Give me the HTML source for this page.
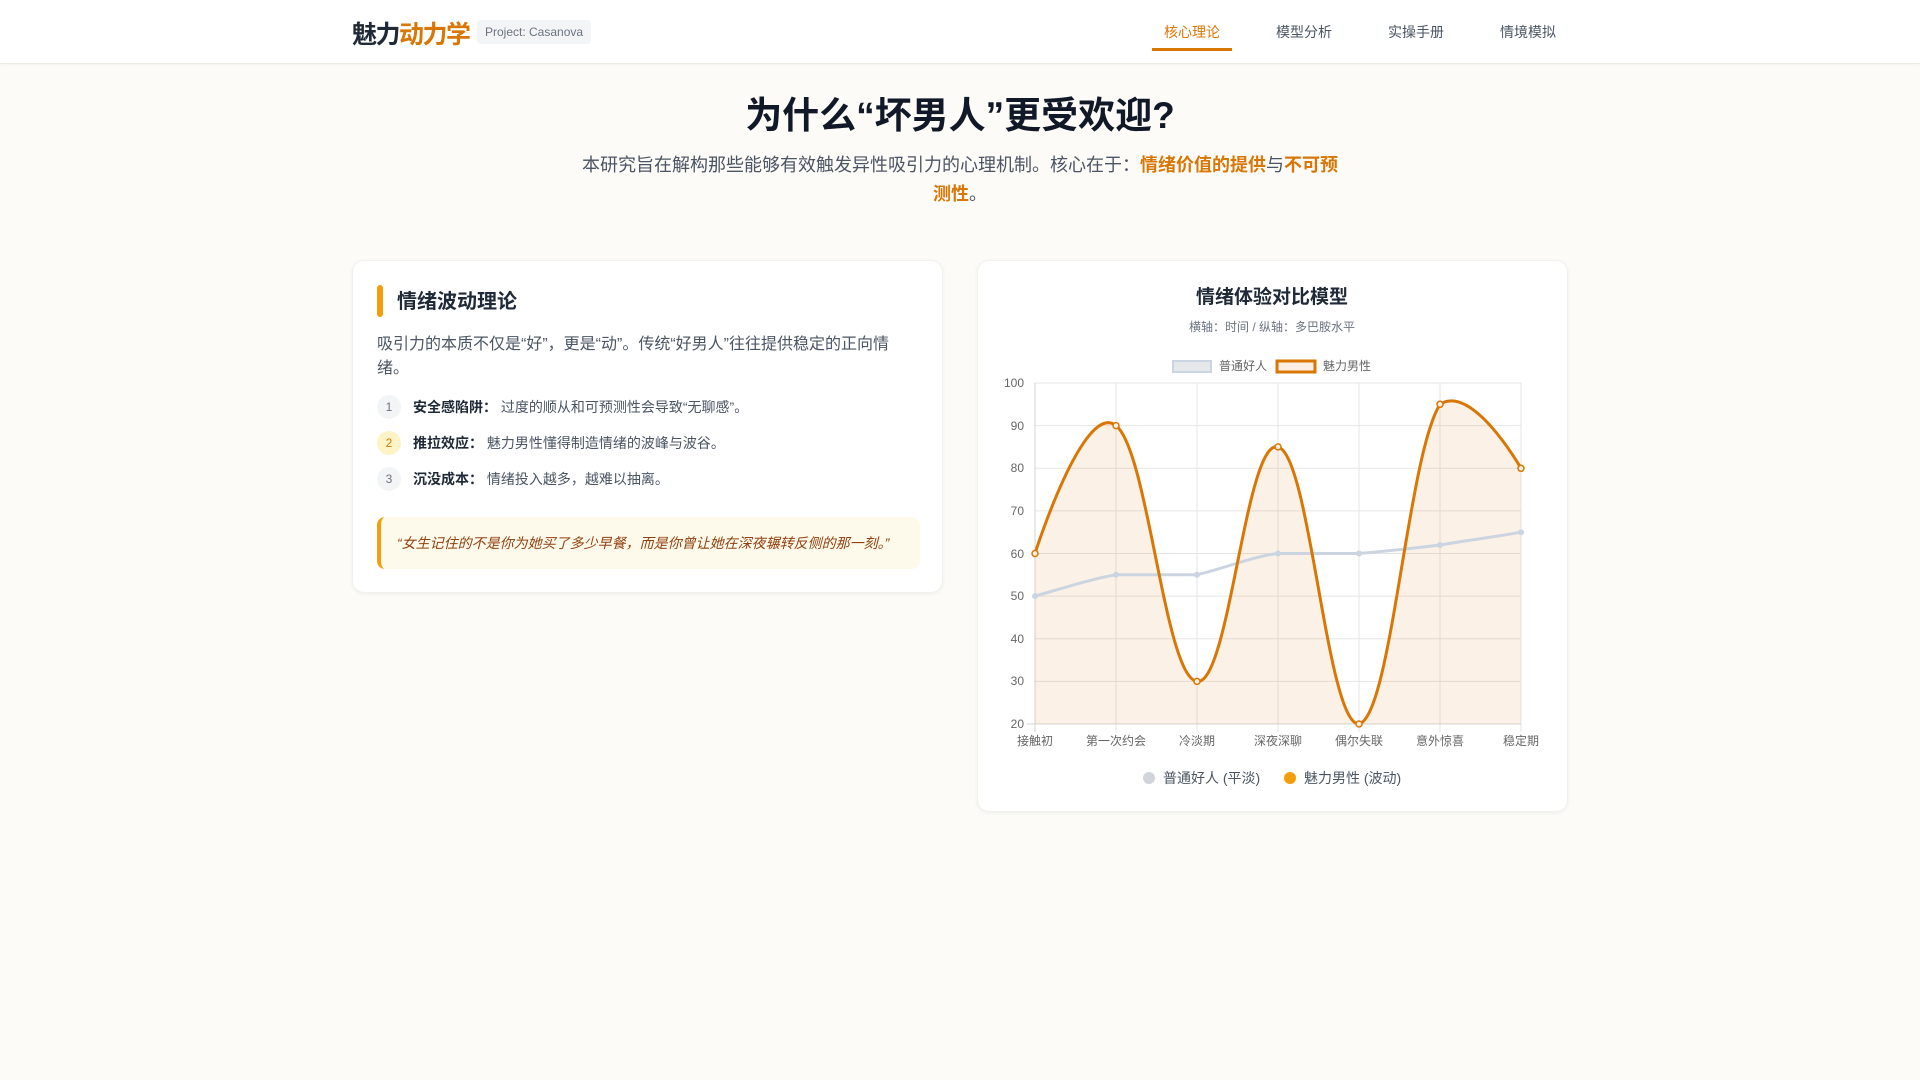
<!DOCTYPE html>
<html><head><meta charset="utf-8"><style>
*{margin:0;padding:0;box-sizing:border-box}
body{width:1920px;height:1080px;background:#fcfbf8;font-family:"Liberation Sans","Noto Sans CJK SC",sans-serif;color:#1f2937;position:relative;overflow:hidden}
.hdr{position:absolute;left:0;top:0;width:1920px;height:64px;background:#fff;border-bottom:1px solid #eeeae4;box-shadow:0 1px 2px rgba(0,0,0,.03)}
.logo{position:absolute;left:352px;top:15px;font-size:25px;font-weight:bold;color:#1f2937;letter-spacing:-1.5px}
.logo span{color:#d97706}
.badge{position:absolute;left:477px;top:20px;height:24px;padding:0 8px;line-height:24px;font-size:12px;color:#6b7280;background:#f3f4f6;border-radius:4px}
.nav{position:absolute;top:22px;font-size:14px;color:#4b5563}
.ul{position:absolute;left:1152px;top:48px;width:80px;height:3px;background:#d97706}
h1{position:absolute;left:0;width:1920px;top:85px;text-align:center;font-size:37px;font-weight:bold;color:#111827}
.sub{position:absolute;left:576px;width:768px;top:151px;text-align:center;font-size:18px;line-height:29px;color:#4b5563}
.sub b{color:#d97706}
.card{position:absolute;background:#fff;border-radius:12px;box-shadow:0 1px 4px rgba(0,0,0,.06);border:1px solid #f3f1ec}
.bar{position:absolute;left:24px;top:24px;width:6px;height:32px;background:#f59e0b;border-radius:3px}
.ct{position:absolute;left:44px;top:24px;font-size:20px;font-weight:bold;color:#1f2937}
.p{position:absolute;left:24px;top:72px;width:520px;font-size:16px;line-height:24px;color:#4b5563}
.li{position:absolute;left:24px;font-size:14px;color:#4b5563;height:24px;line-height:24px}
.li i{display:inline-block;width:24px;height:24px;border-radius:12px;background:#f3f4f6;color:#6b7280;text-align:center;font-style:normal;font-size:12px;margin-right:12px;vertical-align:top}
.li b{color:#1f2937}
.q{position:absolute;left:24px;top:256px;width:543px;height:52px;background:#fefaeb;border-left:4px solid #f59e0b;border-radius:8px;font-size:14px;font-style:italic;color:#92400e;padding-left:16px;line-height:52px}
svg text{font-family:"Liberation Sans","Noto Sans CJK SC",sans-serif}
</style></head><body>
<div class="hdr">
<div class="logo">魅力<span>动力学</span></div>
<div class="badge">Project: Casanova</div>
<div class="nav" style="left:1164px;color:#d97706">核心理论</div>
<div class="nav" style="left:1276px">模型分析</div>
<div class="nav" style="left:1388px">实操手册</div>
<div class="nav" style="left:1500px">情境模拟</div>
<div class="ul"></div>
</div>
<h1>为什么“坏男人”更受欢迎?</h1>
<div class="sub">本研究旨在解构那些能够有效触发异性吸引力的心理机制。核心在于：<b>情绪价值的提供</b>与<b>不可预测性</b>。</div>

<div class="card" style="left:352px;top:260px;width:591px;height:333px">
<div class="bar"></div><div class="ct">情绪波动理论</div>
<div class="p">吸引力的本质不仅是“好”，更是“动”。传统“好男人”往往提供稳定的正向情绪。</div>
<div class="li" style="top:134px"><i>1</i><b>安全感陷阱：</b> 过度的顺从和可预测性会导致“无聊感”。</div>
<div class="li" style="top:170px"><i style="background:#fef3c7;color:#d97706">2</i><b>推拉效应：</b> 魅力男性懂得制造情绪的波峰与波谷。</div>
<div class="li" style="top:206px"><i>3</i><b>沉没成本：</b> 情绪投入越多，越难以抽离。</div>
<div class="q">“女生记住的不是你为她买了多少早餐，而是你曾让她在深夜辗转反侧的那一刻。”</div>
</div>

<div class="card" style="left:977px;top:260px;width:591px;height:552px"></div>
<svg width="1920" height="1080" style="position:absolute;left:0;top:0">
<text x="1272" y="303" text-anchor="middle" font-size="19" font-weight="bold" fill="#1f2937">情绪体验对比模型</text>
<text x="1272" y="331" text-anchor="middle" font-size="12" fill="#6b7280">横轴：时间 / 纵轴：多巴胺水平</text>
<rect x="1173" y="361" width="38" height="11" fill="#e5e7eb" stroke="#cbd5e1" stroke-width="2"/>
<text x="1219" y="370" font-size="12" fill="#666">普通好人</text>
<rect x="1277" y="361" width="38" height="11" fill="#fbefe3" stroke="#d97706" stroke-width="3"/>
<text x="1323" y="370" font-size="12" fill="#666">魅力男性</text>
<g stroke="#e5e5e5" stroke-width="1">
<line x1="1035" y1="383" x2="1521" y2="383"/><line x1="1035" y1="425.6" x2="1521" y2="425.6"/><line x1="1035" y1="468.3" x2="1521" y2="468.3"/><line x1="1035" y1="510.9" x2="1521" y2="510.9"/><line x1="1035" y1="553.5" x2="1521" y2="553.5"/><line x1="1035" y1="596.1" x2="1521" y2="596.1"/><line x1="1035" y1="638.8" x2="1521" y2="638.8"/><line x1="1035" y1="681.4" x2="1521" y2="681.4"/>
<line x1="1116" y1="383" x2="1116" y2="732"/><line x1="1197" y1="383" x2="1197" y2="732"/><line x1="1278" y1="383" x2="1278" y2="732"/><line x1="1359" y1="383" x2="1359" y2="732"/><line x1="1440" y1="383" x2="1440" y2="732"/><line x1="1521" y1="383" x2="1521" y2="732"/>
</g>
<line x1="1035" y1="383" x2="1035" y2="732" stroke="#d4d4d4"/>
<line x1="1027" y1="724" x2="1521" y2="724" stroke="#d4d4d4"/>
<g font-size="12" fill="#666" text-anchor="end">
<text x="1024" y="387">100</text><text x="1024" y="430">90</text><text x="1024" y="472">80</text><text x="1024" y="515">70</text><text x="1024" y="558">60</text><text x="1024" y="600">50</text><text x="1024" y="643">40</text><text x="1024" y="685">30</text><text x="1024" y="728">20</text>
</g>
<g font-size="12" fill="#666" text-anchor="middle">
<text x="1035" y="745">接触初</text><text x="1116" y="745">第一次约会</text><text x="1197" y="745">冷淡期</text><text x="1278" y="745">深夜深聊</text><text x="1359" y="745">偶尔失联</text><text x="1440" y="745">意外惊喜</text><text x="1521" y="745">稳定期</text>
</g>
<path d="M1035,553.5 C1035,553.5 1083.6,400 1116,425.6 C1148.4,451.2 1164.6,677.1 1197,681.4 C1229.4,685.7 1245.6,438.4 1278,446.9 C1310.4,455.4 1326.6,724 1359,724 C1391.4,715.5 1407.6,455.4 1440,404.3 C1472.4,383 1521,468.3 1521,468.3 L1521,724 L1035,724 Z" fill="rgba(217,119,6,0.1)"/>
<path d="M1035,596.1 C1060,589 1095,578 1116,574.8 L1197,574.8 C1225,568 1255,556 1278,553.5 L1359,553.5 C1390,551 1415,548 1440,545 C1470,540 1500,536 1521,532.2" fill="none" stroke="#cbd5e1" stroke-width="3"/>
<g fill="#cbd5e1"><circle cx="1035" cy="596.1" r="3"/><circle cx="1116" cy="574.8" r="3"/><circle cx="1197" cy="574.8" r="3"/><circle cx="1278" cy="553.5" r="3"/><circle cx="1359" cy="553.5" r="3"/><circle cx="1440" cy="545" r="3"/><circle cx="1521" cy="532.2" r="3"/></g>
<path d="M1035,553.5 C1035,553.5 1083.6,400 1116,425.6 C1148.4,451.2 1164.6,677.1 1197,681.4 C1229.4,685.7 1245.6,438.4 1278,446.9 C1310.4,455.4 1326.6,724 1359,724 C1391.4,715.5 1407.6,455.4 1440,404.3 C1472.4,383 1521,468.3 1521,468.3" fill="none" stroke="#d97706" stroke-width="3"/>
<g fill="#fbefe3" stroke="#d97706" stroke-width="1.5"><circle cx="1035" cy="553.5" r="3"/><circle cx="1116" cy="425.6" r="3"/><circle cx="1197" cy="681.4" r="3"/><circle cx="1278" cy="446.9" r="3"/><circle cx="1359" cy="724" r="3"/><circle cx="1440" cy="404.3" r="3"/><circle cx="1521" cy="468.3" r="3"/></g>
<circle cx="1149" cy="778" r="6" fill="#d1d5db"/>
<text x="1163" y="783" font-size="14" fill="#4b5563">普通好人 (平淡)</text>
<circle cx="1290" cy="778" r="6" fill="#f59e0b"/>
<text x="1304" y="783" font-size="14" fill="#4b5563">魅力男性 (波动)</text>
</svg>
</body></html>
